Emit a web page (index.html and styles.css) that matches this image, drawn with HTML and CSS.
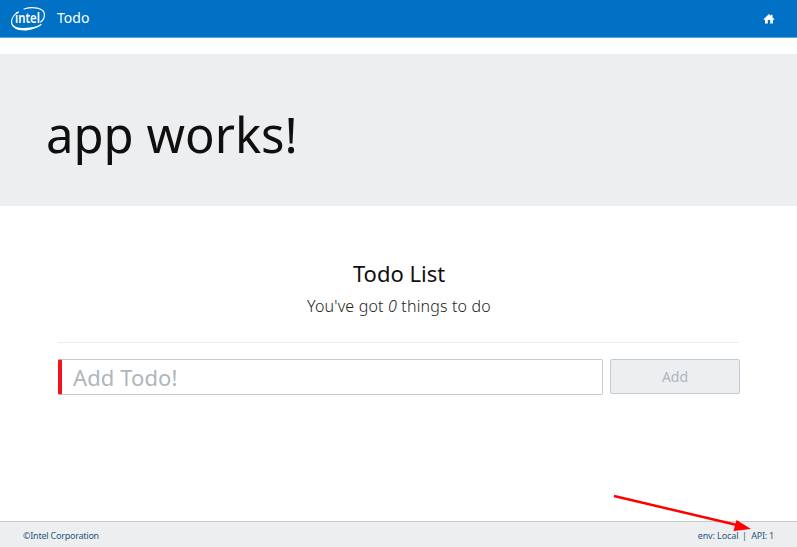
FILE: index.html
```html
<!DOCTYPE html>
<html lang="en">
<head>
<meta charset="utf-8">
<title>Todo</title>
<link rel="stylesheet" href="styles.css">
</head>
<body>
<header class="navbar">
  <svg class="logo" width="36" height="26" viewBox="0 0 36 26" aria-label="intel">
    <path d="M14 3C23 .3 33.500 2 34.300 7.500C34.800 11.500 33 14.500 30.500 16M8.500 6C4.500 8.200 1 12.500 1.700 17C2.500 22.500 10 24.500 19 23C25 22 29 20.300 31 18.500" fill="none" stroke="#fff" stroke-width="1.200" stroke-linecap="round"/>
    <path d="M1.700 17C4 22 12 22.500 20 21.600C25 21 29 19.500 31.500 18C28 22 20 24.500 14 24.500C7 24.500 2.500 21.800 1.700 17Z" fill="#fff"/>
    <text class="logo-text" x="5" y="17" textLength="25" lengthAdjust="spacingAndGlyphs">intel</text>
  </svg>
  <span class="brand">Todo</span>
  <svg class="home" width="12" height="10" viewBox="0 0 12 10" aria-label="Home">
    <path d="M6 0L8 1.800V.8H9.500V3.200L11.500 5.200L10.800 6L10 5.400V9.500H7.200V6H4.800V9.500H2V5.400L1.200 6L.5 5.200Z" fill="#fff"/>
  </svg>
</header>
<section class="hero"><h1>app works!</h1></section>
<main class="content">
  <h2>Todo List</h2>
  <p class="lead">You've got <em>0</em> things to do</p>
  <form class="todo-form">
    <input class="todo-input" type="text" placeholder="Add Todo!">
    <button class="add" type="button" disabled>Add</button>
  </form>
</main>
<footer class="footer">
  <span class="copyright">©Intel Corporation</span>
  <span class="status"><span class="env">env: Local</span><span>|</span><span>API: 1</span></span>
</footer>
<svg class="arrow" width="140" height="40" viewBox="0 0 140 40">
  <path d="M1 3L124 32" stroke="#f00" stroke-width="2.500"/>
  <path d="M138 36L120.500 38L123.500 27Z" fill="#f00"/>
</svg>
</body>
</html>
```
FILE: styles.css
```css
* { box-sizing: border-box; }
body {
  margin: 0;
  height: 547px;
  display: flex;
  flex-direction: column;
  position: relative;
  overflow: hidden;
  background: #fff;
  color: #0f0f0f;
  font-family: "Noto Sans", "Open Sans", sans-serif;
}
.navbar {
  height: 38px;
  flex: none;
  display: flex;
  align-items: center;
  padding: 0 22px 0 10px;
  background: #0071c5;
  border-bottom: 1px solid #5ba3da;
  color: #fff;
}
.logo-text { font: 600 13.5px "Noto Sans", sans-serif; fill: #fff; }
.brand { margin-left: 11px; font-size: 14px; line-height: 20px; position: relative; top: -1px; }
.home { margin-left: auto; }
.hero {
  margin-top: 16px;
  height: 152px;
  flex: none;
  padding: 46px 46px 0;
  background: #edeef0;
}
h1 { margin: 0; font-size: 49px; line-height: 68px; font-weight: 400; }
.content {
  flex: 1;
  padding: 52px 57px 0 58px;
}
h2 { margin: 0; font-size: 22px; line-height: 30px; font-weight: 400; text-align: center; }
.lead {
  margin: 6px 0 0;
  height: 49px;
  border-bottom: 1px solid #eee;
  font-size: 16px;
  line-height: 24px;
  font-weight: 300;
  letter-spacing: .17px;
  text-align: center;
  color: #222;
}
.todo-form { display: flex; gap: 7px; margin: 16px 0 0; }
.todo-input {
  width: 545px;
  height: 36px;
  padding: 0 0 1px 11px;
  border: 1px solid #c4cacf;
  border-left: 4px solid #f0141e;
  border-radius: 2px;
  background: #fff;
  font: 22px "Noto Sans", sans-serif;
  letter-spacing: .1px;
}
.todo-input::placeholder { color: #aeb6bd; opacity: 1; }
.add {
  flex: 1;
  height: 35px;
  padding: 0;
  border: 1px solid #c4cacf;
  border-radius: 2px;
  background: #edeef0;
  color: #aeb6bd;
  font: 14px "Noto Sans", sans-serif;
}
.footer {
  height: 26px;
  flex: none;
  display: flex;
  justify-content: space-between;
  padding: 2px 23px 0;
  border-top: 1px solid #c4cacf;
  background: #edeef0;
  color: #27567f;
  font-size: 9px;
  line-height: 23px;
  letter-spacing: -.23px;
}
.status { display: flex; gap: 4.5px; }
.env { letter-spacing: -.1px; margin-right: -1px; }
.arrow { position: absolute; left: 613px; top: 493px; }
```
